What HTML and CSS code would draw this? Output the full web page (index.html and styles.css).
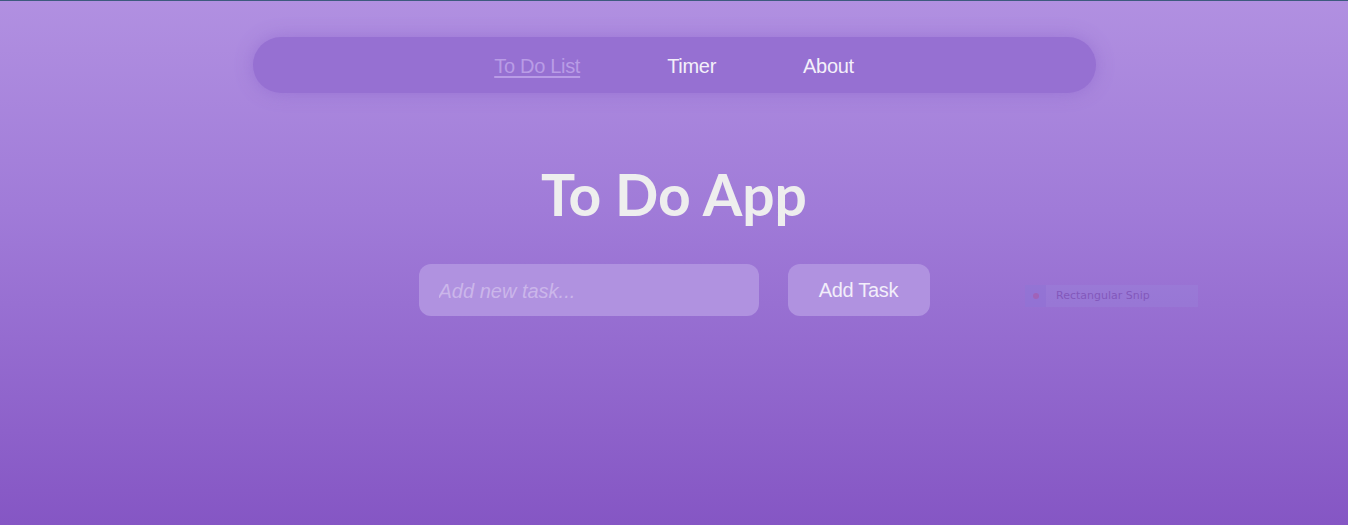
FILE: index.html
```
<!DOCTYPE html>
<html lang="en">
<head>
<meta charset="utf-8">
<title>To Do App</title>
<link rel="stylesheet" href="styles.css">
</head>
<body>
<div class="topline"></div>
<div class="page">
  <nav class="nav">
    <a class="nav-link active" href="#">To Do List</a>
    <a class="nav-link" href="#">Timer</a>
    <a class="nav-link" href="#">About</a>
  </nav>
  <h1 class="title">To Do App</h1>
  <form class="add-form">
    <input class="task-input" type="text" placeholder="Add new task...">
    <button class="add-btn" type="button">Add Task</button>
  </form>
</div>
<div class="snip"><span class="snip-icon"><span class="snip-dot"></span></span><span class="snip-text">Rectangular Snip</span></div>
</body>
</html>
```
FILE: styles.css
```
html, body {
  margin: 0;
  height: 100%;
}
body {
  background: linear-gradient(180deg, #b190e1 0%, #a07bd8 40%, #8556c4 100%);
  font-family: "Liberation Sans", Arial, sans-serif;
  color: #eeeeee;
  overflow: hidden;
}
.topline {
  height: 1px;
  background: #3d5a7e;
}
.page {
  display: flex;
  flex-direction: column;
  align-items: center;
  padding-top: 36px;
}
.nav {
  width: 843px;
  height: 56px;
  box-sizing: border-box;
  padding-top: 3px;
  border-radius: 28px;
  background: #9670d2;
  box-shadow: 0 0 18px rgba(130, 90, 200, 0.45);
  display: flex;
  justify-content: center;
  align-items: center;
  gap: 87px;
}
.nav-link {
  font-size: 20px;
  color: #f4f0fa;
  text-decoration: none;
  letter-spacing: -0.3px;
}
.nav-link.active {
  color: #b99ce6;
  text-decoration: underline;
  text-underline-offset: 3px;
}
.title {
  margin: 66px 0 0;
  font-family: Lato, "Liberation Sans", sans-serif;
  font-weight: 700;
  font-size: 57px;
  line-height: 70px;
  color: #eeeeee;
}
.add-form {
  margin-top: 35px;
  display: flex;
  gap: 29px;
}
.task-input {
  width: 340px;
  height: 52px;
  box-sizing: border-box;
  border: none;
  border-radius: 12px;
  background: #b092e0;
  padding: 2px 20px 0;
  font-family: "Liberation Sans", Arial, sans-serif;
  font-size: 20px;
  color: #eeeeee;
  outline: none;
}
.task-input::placeholder {
  color: #cbb6ea;
  font-style: italic;
}
.add-btn {
  width: 142px;
  height: 52px;
  border: none;
  border-radius: 12px;
  background: #b092e0;
  padding-top: 2px;
  font-family: "Liberation Sans", Arial, sans-serif;
  font-size: 20px;
  color: #f2eefa;
  letter-spacing: -0.3px;
}
.snip {
  position: absolute;
  left: 1025px;
  top: 285px;
  width: 173px;
  height: 22px;
  display: flex;
  opacity: 0.35;
}
.snip-icon {
  width: 21px;
  background: #8a78d8;
  display: flex;
  align-items: center;
  justify-content: center;
}
.snip-dot {
  width: 6px;
  height: 6px;
  border-radius: 50%;
  background: #b04a8a;
}
.snip-text {
  flex: 1;
  background: #9a86dc;
  color: #5a2a90;
  font-family: "DejaVu Sans", sans-serif;
  font-size: 11px;
  line-height: 22px;
  padding-left: 10px;
}
```
